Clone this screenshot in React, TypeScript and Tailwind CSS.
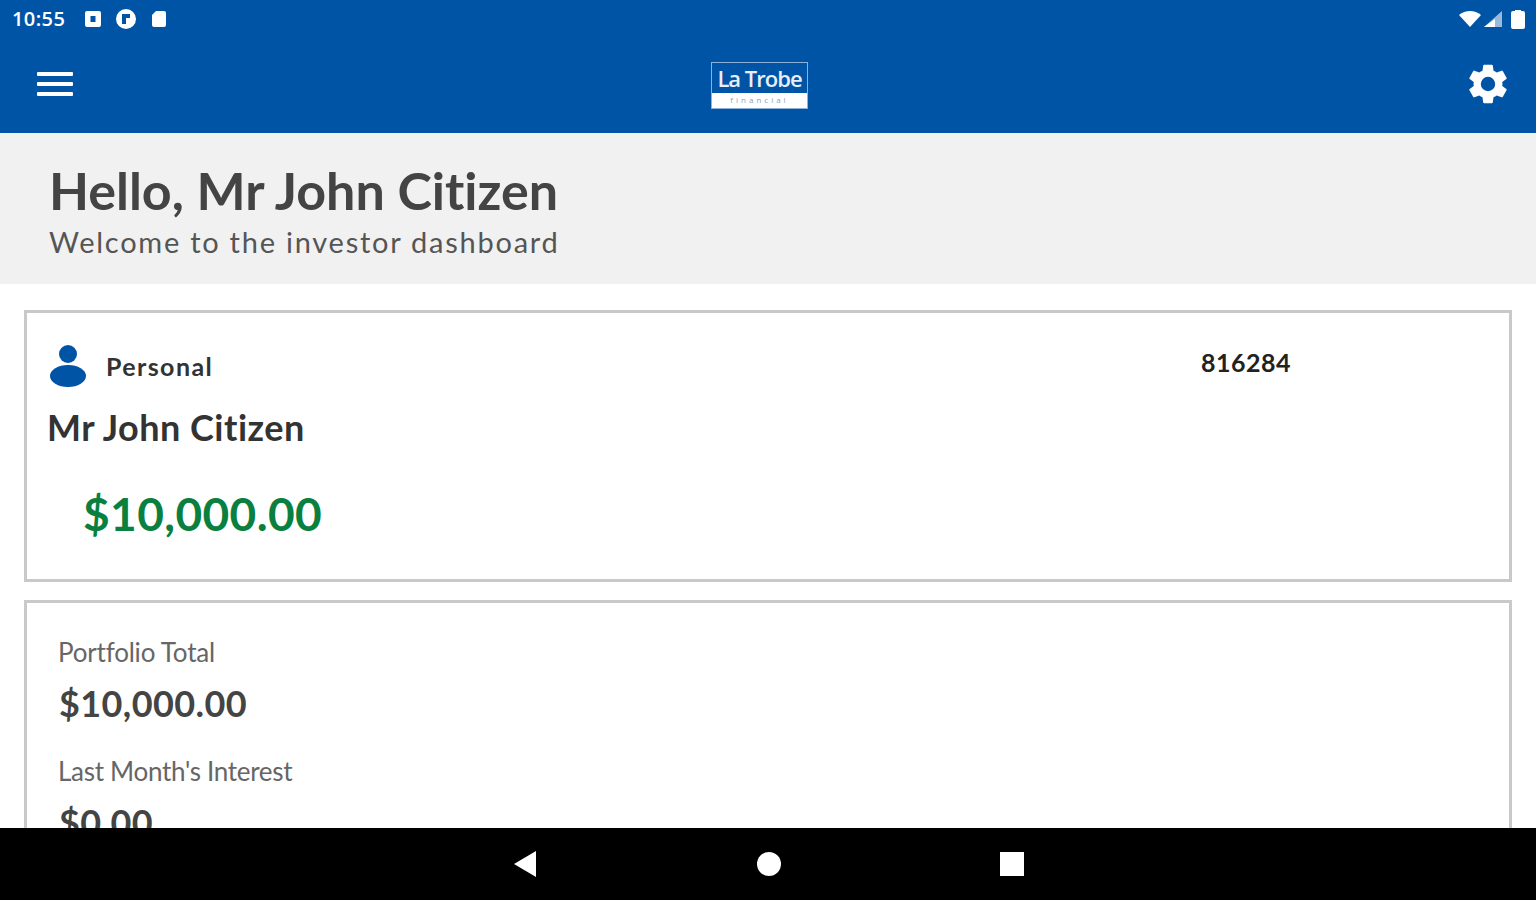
const font = "font-['Lato','Open_Sans',sans-serif] [font-variant-ligatures:none]"

function StatusBar() {
  return (
    <div className="flex h-[37px] items-center justify-between pl-3 pr-[11px] text-white">
      <div className="flex items-center">
        <span className="w-[56px] font-['Open_Sans',sans-serif] text-[20px] leading-none font-semibold tracking-[0.4px]">10:55</span>
        <svg className="ml-[16px]" width="18" height="18" viewBox="0 0 18 18">
          <path fill="#fff" fillRule="evenodd" d="M3 1h12a2 2 0 0 1 2 2v12a2 2 0 0 1-2 2H3a2 2 0 0 1-2-2V3a2 2 0 0 1 2-2zm3.500 5v6h5V6z" />
        </svg>
        <svg className="ml-[14px]" width="20" height="20" viewBox="0 0 20 20">
          <path fill="#fff" fillRule="evenodd" d="M10 0a10 10 0 1 0 0 20a10 10 0 0 0 0-20zM6 5h8v4h-4v6H6z" />
        </svg>
        <svg className="ml-[14px]" width="18" height="18" viewBox="0 0 18 18">
          <path fill="#fff" d="M6 1h8a2 2 0 0 1 2 2v12a2 2 0 0 1-2 2H4a2 2 0 0 1-2-2V5z" />
        </svg>
      </div>
      <div className="flex items-center">
        <svg width="22" height="18" viewBox="0 0 22 18">
          <path fill="#fff" d="M11 17 0 5q5-4 11-4t11 4z" />
        </svg>
        <svg className="ml-[2px]" width="20" height="18" viewBox="0 0 20 18">
          <path fill="#fff" d="M19 1v16H1z" opacity="0.6" />
          <path fill="#fff" d="M12 9v8H1z" />
        </svg>
        <svg className="ml-[8px]" width="14" height="20" viewBox="0 0 14 20">
          <path fill="#fff" d="M4 2V1h6v1h2a2 2 0 0 1 2 2v14a2 2 0 0 1-2 2H2a2 2 0 0 1-2-2V4a2 2 0 0 1 2-2z" />
        </svg>
      </div>
    </div>
  )
}

function Toolbar() {
  return (
    <div className="flex h-[96px] items-center justify-between pl-[37px] pr-[24px]">
      <div className="mb-[2px] flex w-[36px] flex-col gap-[6px]">
        <div className="h-[4px] rounded-[1px] bg-white" />
        <div className="h-[4px] rounded-[1px] bg-white" />
        <div className="h-[4px] rounded-[1px] bg-white" />
      </div>

      {/* Logo */}
      <div className="mr-[18px] flex h-[47px] w-[97px] flex-col border border-[#8fb0d8]">
        <div className="flex h-[30px] items-center justify-center font-['Open_Sans',sans-serif] text-[22px] leading-none font-semibold tracking-[-1px] text-[#e8eef7]">
          La Trobe
        </div>
        <div className="flex h-[15px] items-center justify-center bg-white font-['Open_Sans',sans-serif] text-[8px] leading-none tracking-[3px] text-[#8aa3c4]">
          financial
        </div>
      </div>

      <svg className="mb-[2px]" width="48" height="48" viewBox="0 0 24 24">
        <path
          fill="#fff"
          fillRule="evenodd"
          d="M19.140 12.940c.040-.300.060-.610.060-.940s-.020-.640-.070-.940l2.030-1.580a.49.49 0 0 0 .12-.610l-1.920-3.320a.49.49 0 0 0-.59-.220l-2.390.960a7 7 0 0 0-1.620-.940l-.360-2.540a.48.48 0 0 0-.480-.410h-3.840a.47.47 0 0 0-.470.410l-.360 2.540c-.590.240-1.130.570-1.620.940l-2.390-.960a.48.48 0 0 0-.590.220L2.740 8.870a.47.47 0 0 0 .120.610l2.030 1.580c-.050.300-.090.630-.090.940s.020.640.070.940l-2.030 1.580a.49.49 0 0 0-.120.610l1.920 3.320c.120.220.370.290.590.220l2.390-.960c.500.380 1.030.700 1.620.940l.360 2.540c.050.240.240.410.480.410h3.840c.240 0 .440-.170.470-.410l.360-2.540c.590-.240 1.130-.560 1.620-.940l2.390.960c.220.080.470 0 .590-.220l1.920-3.320a.47.47 0 0 0-.120-.610zM12 15.600a3.600 3.600 0 1 1 0-7.200a3.600 3.600 0 0 1 0 7.200z"
        />
      </svg>
    </div>
  )
}

function AccountCard() {
  return (
    <div className="mx-[24px] mt-[26px] h-[272px] shrink-0 border-[3px] border-[#c9c9c9] bg-white">
      <div className="flex items-start justify-between pl-[22px] pr-[218px] pt-[31px]">
        <div className="flex items-center">
          <svg width="38" height="44" viewBox="0 0 38 44">
            <circle cx="19" cy="10" r="9" fill="#0054a6" />
            <ellipse cx="19" cy="32" rx="18" ry="11" fill="#0054a6" />
          </svg>
          <span className="ml-[19px] text-[25px] leading-none font-bold tracking-[1.400px] text-[#333]">Personal</span>
        </div>
        <span className="mt-[6px] text-[25px] leading-none font-bold tracking-[0.5px] text-[#222]">816284</span>
      </div>
      <div className="mt-[17px] pl-[20px] text-[36px] leading-[44px] font-bold tracking-[0.5px] text-[#333]">
        Mr John Citizen
      </div>
      <div className="mt-[35px] pl-[56px] text-[46px] leading-[60px] font-bold tracking-[0.4px] text-[#0a8040]">
        $10,000.00
      </div>
    </div>
  )
}

function PortfolioCard() {
  return (
    <div className="mx-[24px] mt-[18px] flex-1 border-[3px] border-b-0 border-[#c9c9c9] bg-white pl-[31px] pt-[32px]">
      <div className="text-[26px] leading-[34px] tracking-[-0.2px] text-[#666]">Portfolio Total</div>
      <div className="mt-[11px] pl-[1px] text-[36px] leading-[46px] font-bold tracking-[0.4px] text-[#444]">$10,000.00</div>
      <div className="mt-[28px] text-[26px] leading-[34px] tracking-[-0.3px] text-[#666]">Last Month's Interest</div>
      <div className="mt-[11px] pl-[1px] text-[36px] leading-[46px] font-bold tracking-[0.4px] text-[#444]">$0.00</div>
    </div>
  )
}

export default function App() {
  return (
    <div className={`flex h-[900px] w-[1536px] flex-col overflow-hidden bg-white ${font}`}>
      <div className="shrink-0 bg-[#0054a6]">
        <StatusBar />
        <Toolbar />
      </div>

      {/* Greeting */}
      <div className="h-[151px] shrink-0 bg-[#f1f1f1] pl-[49px] pt-[27px]">
        <div className="text-[52px] leading-[60px] font-bold text-[#444]">Hello, Mr John Citizen</div>
        <div className="mt-[3px] text-[29px] leading-[38px] tracking-[1.750px] text-[#555]">Welcome to the investor dashboard</div>
      </div>

      <div className="flex min-h-0 flex-1 flex-col overflow-hidden">
        <AccountCard />
        <PortfolioCard />
      </div>

      {/* Nav bar */}
      <div className="flex h-[72px] shrink-0 items-center justify-center bg-black">
        <svg width="24" height="26" viewBox="0 0 24 26">
          <path fill="#fff" d="M23 0v26L1 13z" />
        </svg>
        <svg className="ml-[220px]" width="24" height="24" viewBox="0 0 24 24">
          <circle cx="12" cy="12" r="12" fill="#fff" />
        </svg>
        <svg className="ml-[219px]" width="24" height="24" viewBox="0 0 24 24">
          <rect width="24" height="24" fill="#fff" />
        </svg>
      </div>
    </div>
  )
}
